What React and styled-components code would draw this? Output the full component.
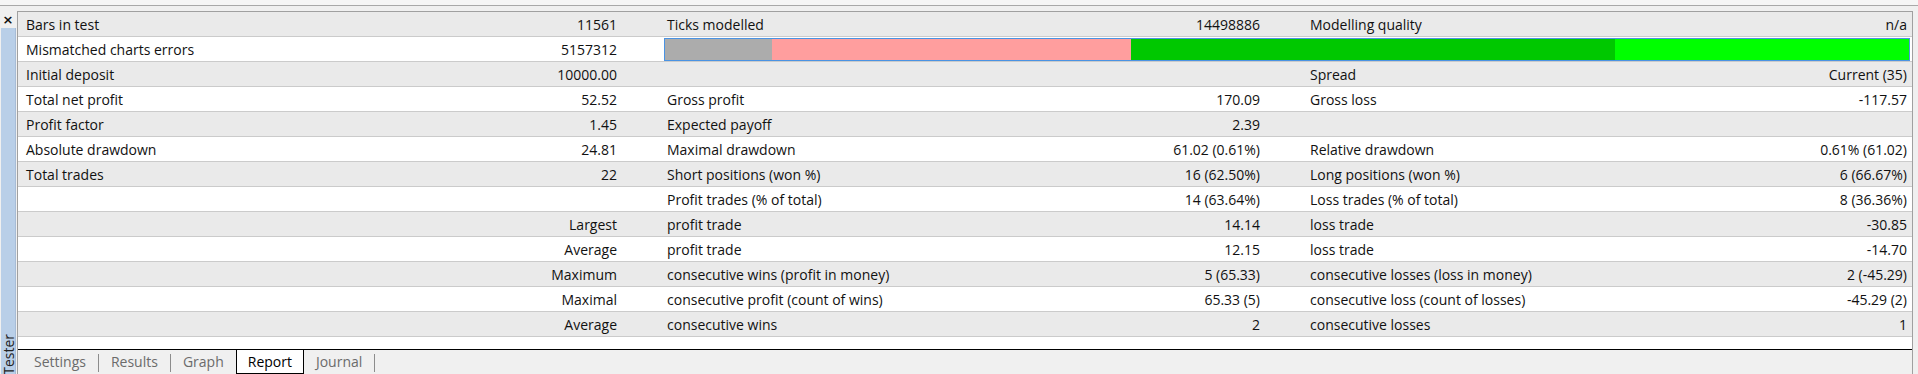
import styled, { createGlobalStyle } from "styled-components";

const GlobalStyle = createGlobalStyle`
  html, body {
    margin: 0;
    padding: 0;
    background: #f0f0f0;
  }
  body {
    font-family: "Open Sans", "Liberation Sans", sans-serif;
    font-size: 14px;
    color: #111;
  }
`;

const rows = [
  ["Bars in test", "11561", "Ticks modelled", "14498886", "Modelling quality", "n/a"],
  "bar",
  ["Initial deposit", "10000.00", "", "", "Spread", "Current (35)"],
  ["Total net profit", "52.52", "Gross profit", "170.09", "Gross loss", "-117.57"],
  ["Profit factor", "1.45", "Expected payoff", "2.39", "", ""],
  ["Absolute drawdown", "24.81", "Maximal drawdown", "61.02 (0.61%)", "Relative drawdown", "0.61% (61.02)"],
  ["Total trades", "22", "Short positions (won %)", "16 (62.50%)", "Long positions (won %)", "6 (66.67%)"],
  ["", "", "Profit trades (% of total)", "14 (63.64%)", "Loss trades (% of total)", "8 (36.36%)"],
  ["", "Largest", "profit trade", "14.14", "loss trade", "-30.85"],
  ["", "Average", "profit trade", "12.15", "loss trade", "-14.70"],
  ["", "Maximum", "consecutive wins (profit in money)", "5 (65.33)", "consecutive losses (loss in money)", "2 (-45.29)"],
  ["", "Maximal", "consecutive profit (count of wins)", "65.33 (5)", "consecutive loss (count of losses)", "-45.29 (2)"],
  ["", "Average", "consecutive wins", "2", "consecutive losses", "1"],
];

// modelling quality bar pieces (px of the inner bar)
const quality = [
  { color: "#acacac", size: 107 },
  { color: "#ff9e9e", size: 359 },
  { color: "#00c800", size: 485 },
  { color: "#00ff00", size: 294 },
];

const tabs = ["Settings", "Results", "Graph", "Report", "Journal"];
const activeTab = "Report";

const App = () => {
  const activeIdx = tabs.indexOf(activeTab);

  return (
    <Frame>
      <GlobalStyle />
      <TopStrip />
      <Body>
        <SideBar>
          <CloseBox>×</CloseBox>
          <BlueStrip>
            <VerticalTitle>Tester</VerticalTitle>
          </BlueStrip>
        </SideBar>
        <Main>
          <Report>
            {rows.map((row, i) =>
              row === "bar" ? (
                <Row key={i} $odd={i % 2 === 0}>
                  <Label>Mismatched charts errors</Label>
                  <Value>5157312</Value>
                  <span />
                  <QualityBar>
                    {quality.map((q, j) => (
                      <QualityPiece key={j} $color={q.color} $size={q.size} />
                    ))}
                  </QualityBar>
                </Row>
              ) : (
                <Row key={i} $odd={i % 2 === 0}>
                  <Label>{row[0]}</Label>
                  <Value>{row[1]}</Value>
                  <span />
                  <Label>{row[2]}</Label>
                  <Value>{row[3]}</Value>
                  <span />
                  <Label>{row[4]}</Label>
                  <Value>{row[5]}</Value>
                </Row>
              )
            )}
          </Report>
          <TabBar>
            {tabs.map((t, i) => {
              const active = t === activeTab;
              const sep = !active && i + 1 !== activeIdx;
              return (
                <TabItem key={t}>
                  <Tab $active={active}>{t}</Tab>
                  {sep && <TabSep />}
                </TabItem>
              );
            })}
          </TabBar>
        </Main>
        <RightGap />
      </Body>
    </Frame>
  );
};

const Frame = styled.div`
  display: flex;
  flex-direction: column;
  width: 1918px;
  height: 374px;
  overflow: hidden;
  background: #f0f0f0;
`;

const TopStrip = styled.div`
  height: 5px;
  background: #f6f6f6;
  border-bottom: 1px solid #a9a9a9;
  margin-bottom: 5px;
`;

const Body = styled.div`
  flex: 1;
  display: flex;
  min-height: 0;
`;

const SideBar = styled.div`
  width: 17px;
  display: flex;
  flex-direction: column;
`;

const CloseBox = styled.div`
  height: 17px;
  display: flex;
  justify-content: center;
  align-items: center;
  font-family: "DejaVu Sans", sans-serif;
  font-size: 13px;
  font-weight: bold;
  line-height: 1;
  color: #111;
  padding-right: 1px;
`;

const BlueStrip = styled.div`
  flex: 1;
  margin: 0 1px 0 1px;
  background: #b9cfe8;
  border-right: 1px solid #a7bcd6;
  display: flex;
  flex-direction: column;
  justify-content: flex-end;
  align-items: center;
`;

const VerticalTitle = styled.div`
  writing-mode: vertical-rl;
  transform: rotate(180deg);
  font-size: 14px;
  line-height: 15px;
  color: #222;
  margin-bottom: -1px;
`;

const Main = styled.div`
  flex: 1;
  display: flex;
  flex-direction: column;
  border-left: 1px solid #a0a0a0;
  border-right: 1px solid #a0a0a0;
`;

const Report = styled.div`
  flex: 1;
  background: #fff;
  border-top: 1px solid #a0a0a0;
`;

const Row = styled.div`
  display: grid;
  grid-template-columns: 302px 302px 37px 301px 305px 37px 298px 312px;
  height: 24px;
  align-items: center;
  background: ${(p) => (p.$odd ? "#eaeaea" : "#ffffff")};
  border-bottom: 1px solid #cbcbcb;
  white-space: nowrap;
`;

const Label = styled.div`
  padding-left: 8px;
  overflow: hidden;
`;

const Value = styled.div`
  padding-right: 5px;
  text-align: right;
`;

const QualityBar = styled.div`
  grid-column: 4 / -1;
  display: flex;
  height: 21px;
  margin: 0 2px 0 5px;
  border: 1px solid #4a93e3;
`;

const QualityPiece = styled.div`
  flex: ${(p) => p.$size} 0 0;
  background: ${(p) => p.$color};
`;

const TabBar = styled.div`
  height: 24px;
  display: flex;
  align-items: stretch;
  padding-left: 4px;
  border-top: 1px solid #000;
  background: #f0f0f0;
`;

const TabItem = styled.div`
  display: flex;
  align-items: center;
`;

const Tab = styled.div`
  height: 100%;
  display: flex;
  align-items: center;
  box-sizing: border-box;
  padding: ${(p) => (p.$active ? "0 11px 1px" : "0 12px 1px")};
  color: ${(p) => (p.$active ? "#000" : "#6b6b6b")};
  background: ${(p) => (p.$active ? "#fff" : "transparent")};
  border: ${(p) => (p.$active ? "1px solid #000" : "none")};
  border-top: none;
`;

const TabSep = styled.div`
  width: 1px;
  height: 18px;
  margin-top: 2px;
  background: #8c8c8c;
`;

const RightGap = styled.div`
  width: 5px;
`;

export default App;
